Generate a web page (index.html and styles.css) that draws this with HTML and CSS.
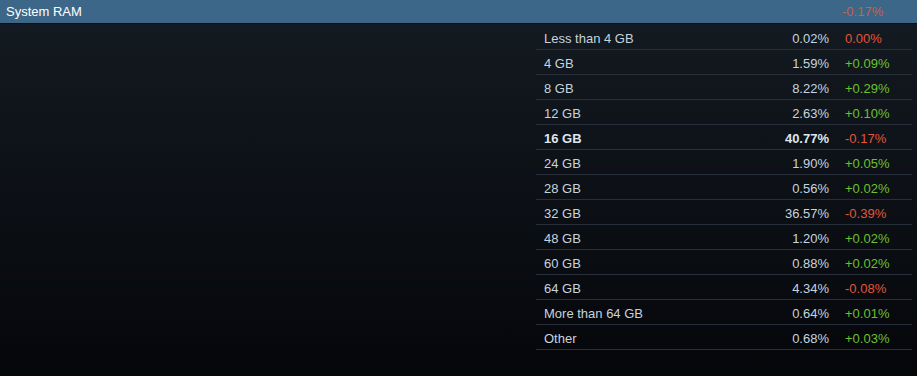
FILE: index.html
```html
<!DOCTYPE html>
<html>
<head>
    <title>System RAM</title>
    <link rel="stylesheet" href="styles.css">
</head>
<body>
    <div class="stat-header">
        <div class="stat-title">System RAM</div>
        <div class="stat-change down">-0.17%</div>
    </div>
    <div class="stat-body">
        <div class="chart-space"></div>
        <div class="stat-table">
            <div class="row"><span class="label">Less than 4 GB</span><span class="pct">0.02%</span><span class="change down">0.00%</span></div>
            <div class="row"><span class="label">4 GB</span><span class="pct">1.59%</span><span class="change up">+0.09%</span></div>
            <div class="row"><span class="label">8 GB</span><span class="pct">8.22%</span><span class="change up">+0.29%</span></div>
            <div class="row"><span class="label">12 GB</span><span class="pct">2.63%</span><span class="change up">+0.10%</span></div>
            <div class="row top"><span class="label">16 GB</span><span class="pct">40.77%</span><span class="change down">-0.17%</span></div>
            <div class="row"><span class="label">24 GB</span><span class="pct">1.90%</span><span class="change up">+0.05%</span></div>
            <div class="row"><span class="label">28 GB</span><span class="pct">0.56%</span><span class="change up">+0.02%</span></div>
            <div class="row"><span class="label">32 GB</span><span class="pct">36.57%</span><span class="change down">-0.39%</span></div>
            <div class="row"><span class="label">48 GB</span><span class="pct">1.20%</span><span class="change up">+0.02%</span></div>
            <div class="row"><span class="label">60 GB</span><span class="pct">0.88%</span><span class="change up">+0.02%</span></div>
            <div class="row"><span class="label">64 GB</span><span class="pct">4.34%</span><span class="change down">-0.08%</span></div>
            <div class="row"><span class="label">More than 64 GB</span><span class="pct">0.64%</span><span class="change up">+0.01%</span></div>
            <div class="row"><span class="label">Other</span><span class="pct">0.68%</span><span class="change up">+0.03%</span></div>
        </div>
    </div>
</body>
</html>
```

FILE: styles.css
```css
html {
    height: 100%;
}
body {
    margin: 0;
    min-height: 100%;
    font-family: "Liberation Sans", Arial, sans-serif;
    font-size: 13px;
    color: #c6d4df;
    background: linear-gradient(to bottom, #141b22 0%, #05060a 100%);
}
.stat-header {
    display: flex;
    align-items: center;
    height: 23px;
    background-color: #3d6788;
    border-bottom: 1px solid #0c1016;
}
.stat-title {
    flex: 1;
    padding-left: 6px;
    color: #ffffff;
}
.stat-header .stat-change {
    width: 75px;
    color: #c8604a;
}
.stat-body {
    display: flex;
}
.chart-space {
    width: 536px;
}
.stat-table {
    width: 376px;
    padding-top: 1px;
}
.row {
    display: flex;
    align-items: center;
    height: 22px;
    padding-top: 2px;
    border-bottom: 1px solid #27303a;
}
.label {
    flex: 1;
    padding-left: 8px;
}
.pct {
    text-align: right;
    padding-right: 16px;
}
.change {
    width: 67px;
}
.up {
    color: #6bc12c;
}
.down {
    color: #e0573a;
}
.top .label,
.top .pct {
    font-weight: bold;
    color: #dfe6ec;
}
```
